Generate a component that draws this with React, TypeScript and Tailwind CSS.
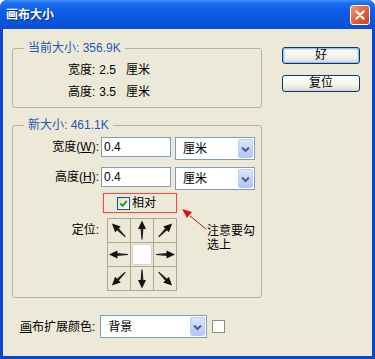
import React from "react";

const FONT = "font-['Liberation_Sans','Noto_Sans_CJK_SC',sans-serif]";

function Chevron() {
  return (
    <svg width="9" height="7" viewBox="0 0 9 7">
      <path d="M1 1.5 L4.5 5 L8 1.5" fill="none" stroke="#4d6185" strokeWidth="2" />
    </svg>
  );
}

function Combo({ className, text }: { className: string; text: string }) {
  return (
    <div className={`flex items-center h-[23px] border border-[#7f9db9] bg-white pl-[7px] pr-px ${className}`}>
      <span className="flex-1 text-[12px] leading-[16px] text-black">{text}</span>
      <span className="w-[15px] h-[19px] rounded-[2px] border border-[#bccdf4] bg-[linear-gradient(to_bottom,#dde7fd,#c3d4fb_50%,#b4c8f6)] flex items-end justify-center pb-[4px]">
        <Chevron />
      </span>
    </div>
  );
}

function Field({ value }: { value: string }) {
  return (
    <div className="w-[70px] h-[20px] border border-[#7f9db9] bg-white pl-[2px] text-[12px] leading-[18px] text-black">
      {value}
    </div>
  );
}

function Arrow({ angle }: { angle: number }) {
  return (
    <svg width="22" height="23" viewBox="0 0 22 23">
      <g transform={`rotate(${angle} 11 11.5)`}>
        <polygon points="11,1.5 7,10 15,10" fill="#111" />
        <polygon points="9.6,9.5 12.4,9.5 11.6,20.5 10.4,20.5" fill="#222" />
      </g>
    </svg>
  );
}

function Cell({ angle }: { angle?: number }) {
  if (angle === undefined) {
    return (
      <div className="w-[22px] h-[23px] bg-[#ece9d8] p-px">
        <div className="w-full h-full bg-white rounded-[3px] border border-[#d6d4c8]" />
      </div>
    );
  }
  return (
    <div className="w-[22px] h-[23px] bg-[#ece9d8] flex items-center justify-center">
      <Arrow angle={angle} />
    </div>
  );
}

export default function App() {
  return (
    <div className={`w-[375px] h-[359px] bg-white ${FONT}`}>
      <div className="flex flex-col w-full h-full rounded-t-[7px] overflow-hidden bg-[#0b45d4]">
        {/* Title bar */}
        <div className="h-[29px] shrink-0 flex items-center justify-between pl-[6px] pr-[5px] bg-[linear-gradient(to_bottom,#3e8ff8_0%,#1a6cf0_12%,#0c5ce6_40%,#0a55e0_75%,#0a4dd2_100%)]">
          <span className="text-white font-bold text-[12px] leading-[16px] [text-shadow:1px_1px_0_#0b2a8a]">
            画布大小
          </span>
          <div className="w-[20px] h-[20px] rounded-[3px] border border-white bg-[linear-gradient(135deg,#f09a78,#e0653d_50%,#c8431c)] flex items-center justify-center">
            <svg width="10" height="10" viewBox="0 0 10 10">
              <path d="M1.5 1.5 L8.5 8.5 M8.5 1.5 L1.5 8.5" stroke="#fff" strokeWidth="2.2" strokeLinecap="round" />
            </svg>
          </div>
        </div>

        {/* Body */}
        <div className="relative flex-1 mx-[3px] mb-[3px] bg-[#ece9d8] flex pt-[11px] pl-[9px] text-[12px] text-black">
          {/* Left column */}
          <div className="w-[250px] flex flex-col">
            <fieldset className="border border-[#b3b2a4] rounded-[3px] m-0 p-0">
              <legend className="ml-[11px] px-[4px] text-[12px] leading-[16px] text-[#2456b4]">当前大小: 356.9K</legend>
              <div className="pl-[55px] pt-[6px] pb-[7px] flex flex-col gap-[6px]">
                <div className="flex h-[16px] leading-[16px]">
                  <span>宽度:</span>
                  <span className="ml-[4px]">2.5</span>
                  <span className="ml-[10px]">厘米</span>
                </div>
                <div className="flex h-[16px] leading-[16px]">
                  <span>高度:</span>
                  <span className="ml-[4px]">3.5</span>
                  <span className="ml-[10px]">厘米</span>
                </div>
              </div>
            </fieldset>

            <fieldset className="mt-[9px] border border-[#b3b2a4] rounded-[3px] m-0 p-0">
              <legend className="ml-[11px] px-[4px] text-[12px] leading-[16px] text-[#2456b4]">新大小: 461.1K</legend>
              <div className="pt-[4px] pb-[6px] flex flex-col">
                <div className="flex items-start">
                  <div className="w-[86px] h-[20px] leading-[20px] text-right">
                    宽度(<span className="underline">W</span>):
                  </div>
                  <div className="ml-[2px]">
                    <Field value="0.4" />
                  </div>
                  <Combo className="ml-[4px] w-[80px]" text="厘米" />
                </div>
                <div className="mt-[7px] flex items-start">
                  <div className="w-[86px] h-[20px] leading-[20px] text-right">
                    高度(<span className="underline">H</span>):
                  </div>
                  <div className="ml-[2px]">
                    <Field value="0.4" />
                  </div>
                  <Combo className="ml-[4px] w-[80px]" text="厘米" />
                </div>
                <div className="mt-[3px] pl-[90px]">
                  <div className="w-[74px] h-[20px] border border-[#e0504e] shadow-[0_0_2px_#f3b4b4] flex items-center pl-[13px]">
                    <span className="w-[13px] h-[13px] border border-[#1c5180] bg-[linear-gradient(135deg,#dcdcd4,#ffffff)] flex items-center justify-center">
                      <svg width="9" height="9" viewBox="0 0 9 9">
                        <path d="M1.2 4.4 L3.6 6.8 L7.8 1.8" fill="none" stroke="#21a121" strokeWidth="2" />
                      </svg>
                    </span>
                    <span className="ml-[2px] leading-[16px]">相对</span>
                  </div>
                </div>
                <div className="mt-[5px] flex items-start">
                  <div className="w-[86px] mt-[4px] leading-[16px] text-right">定位:</div>
                  <div className="ml-[8px] grid grid-cols-3 gap-px p-px bg-[#a9a89b]">
                    <Cell angle={315} />
                    <Cell angle={0} />
                    <Cell angle={45} />
                    <Cell angle={270} />
                    <Cell />
                    <Cell angle={90} />
                    <Cell angle={225} />
                    <Cell angle={180} />
                    <Cell angle={135} />
                  </div>
                </div>
              </div>
            </fieldset>

            <div className="mt-[17px] flex items-center">
              <span className="ml-[8px] leading-[16px]">
                <span className="underline">画</span>布扩展颜色:
              </span>
              <Combo className="ml-[5px] w-[107px]" text="背景" />
              <div className="ml-[5px] w-[13px] h-[13px] border border-[#8e8d84] bg-white" />
            </div>
          </div>

          {/* Right column */}
          <div className="ml-[20px] pt-[7px] flex flex-col gap-[11px]">
            <div className="w-[78px] h-[17px] rounded-[3px] border border-[#003c74] bg-[linear-gradient(to_bottom,#ffffff,#f3f3ee_60%,#e2e0d6_90%,#d4cfc4)] shadow-[inset_0_0_0_1px_#9fbdee,inset_0_0_0_2px_#cfe0fb] flex items-center justify-center leading-[15px]">
              好
            </div>
            <div className="w-[78px] h-[17px] rounded-[3px] border border-[#003c74] bg-[linear-gradient(to_bottom,#ffffff,#f3f3ee_60%,#e2e0d6_90%,#d4cfc4)] flex items-center justify-center leading-[15px]">
              复位
            </div>
          </div>

          {/* Annotation arrow */}
          <svg className="absolute left-[176px] top-[178px]" width="34" height="26" viewBox="0 0 34 26">
            <line x1="11" y1="9" x2="27" y2="22" stroke="#b01818" strokeWidth="1" />
            <polygon points="3,2 13,5 8,11" fill="#e01010" />
          </svg>
          <div className="absolute left-[204px] top-[195px] text-[12px] leading-[14px] text-black">
            注意要勾
            <br />
            选上
          </div>
        </div>
      </div>
    </div>
  );
}
